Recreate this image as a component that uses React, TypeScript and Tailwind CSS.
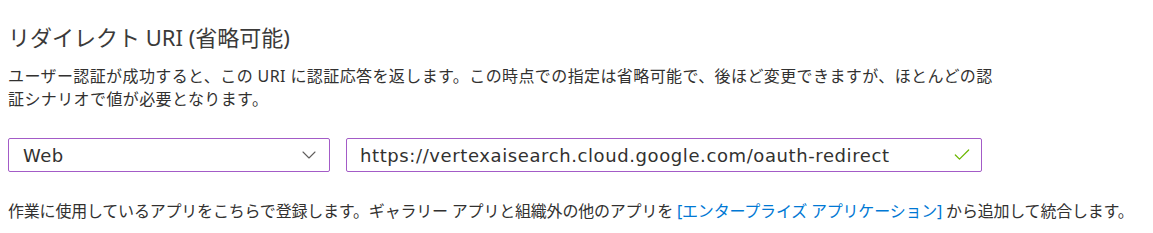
import { ChevronDown, Check } from 'lucide-react';

const font = { fontFamily: '"Noto Sans", "Noto Sans CJK JP", sans-serif' };
const fieldFont = { fontFamily: '"DejaVu Sans", "Noto Sans CJK JP", sans-serif' };

export default function App() {
  return (
    <div className="w-[1153px] h-[233px] bg-white pl-2 pt-[22px] text-[#323130]" style={font}>
      <h2 className="text-[22px] leading-[30px] text-[#3b3a39]">リダイレクト URI (省略可能)</h2>

      <p className="mt-[13px] w-[990px] text-[16px] leading-[23px] tracking-[0.4px]">
        ユーザー認証が成功すると、この URI に認証応答を返します。この時点での指定は省略可能で、後ほど変更できますが、ほとんどの認証シナリオで値が必要となります。
      </p>

      <div className="mt-[27px] flex gap-4" style={fieldFont}>
        <div className="flex h-[34px] w-[322px] items-center justify-between rounded-[2px] border border-[#a35bc7] pl-[14px] pr-[8px]">
          <span className="text-[18px] tracking-[0.5px]">Web</span>
          <ChevronDown className="h-6 w-6 text-[#605e5c]" strokeWidth={1.1} />
        </div>
        <div className="flex h-[34px] w-[636px] items-center justify-between rounded-[2px] border border-[#a35bc7] pl-[13px] pr-[9px]">
          <span className="text-[18px] tracking-[0.6px]">https://vertexaisearch.cloud.google.com/oauth-redirect</span>
          <Check className="h-5 w-5 text-[#6bb700]" strokeWidth={1.5} />
        </div>
      </div>

      <p className="mt-[28px] text-[16px] leading-[23px] tracking-[-0.2px]">
        作業に使用しているアプリをこちらで登録します。ギャラリー アプリと組織外の他のアプリを{' '}
        <a className="text-[#0078d4]">[エンタープライズ アプリケーション]</a> から追加して統合します。
      </p>
    </div>
  );
}
